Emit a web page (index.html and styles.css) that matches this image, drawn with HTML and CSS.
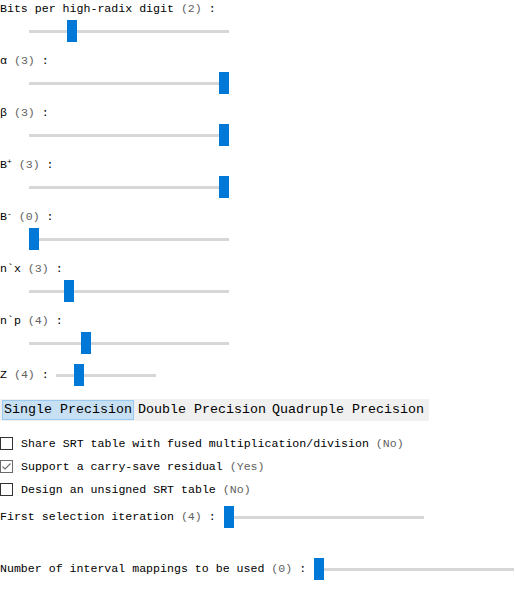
FILE: index.html
```html
<!DOCTYPE html>
<html>
<head>
<meta charset="utf-8">
<link rel="stylesheet" href="styles.css">
</head>
<body>
<div class="panel">
  <div class="field">
    <div class="label">Bits per high-radix digit <span class="val">(2)</span> :</div>
    <input class="range indent" type="range" min="1" max="6" value="2">
  </div>
  <div class="field">
    <div class="label">α <span class="val">(3)</span> :</div>
    <input class="range indent" type="range" min="0" max="3" value="3">
  </div>
  <div class="field">
    <div class="label">β <span class="val">(3)</span> :</div>
    <input class="range indent" type="range" min="0" max="3" value="3">
  </div>
  <div class="field">
    <div class="label">B<sup class="sup">+</sup> <span class="val">(3)</span> :</div>
    <input class="range indent" type="range" min="0" max="3" value="3">
  </div>
  <div class="field">
    <div class="label">B<sup class="sup">-</sup> <span class="val">(0)</span> :</div>
    <input class="range indent" type="range" min="0" max="3" value="0">
  </div>
  <div class="field">
    <div class="label">n`x <span class="val">(3)</span> :</div>
    <input class="range indent" type="range" min="1" max="12" value="3">
  </div>
  <div class="field">
    <div class="label">n`p <span class="val">(4)</span> :</div>
    <input class="range indent" type="range" min="1" max="12" value="4">
  </div>
  <div class="row row-z">
    <div class="label">Z <span class="val">(4)</span> :</div>
    <input class="range short" type="range" min="3" max="8" value="4">
  </div>

  <div class="tabs">
    <button class="tab selected">Single Precision</button>
    <button class="tab">Double Precision</button>
    <button class="tab">Quadruple Precision</button>
  </div>

  <div class="checks">
    <label class="check">
      <span class="box"></span>
      <span class="label">Share SRT table with fused multiplication/division <span class="val">(No)</span></span>
    </label>
    <label class="check">
      <span class="box checked"><svg viewBox="0 0 13 13" width="13" height="13"><path d="M2.5 6.5 L5 9 L10.5 3.5" fill="none" stroke="#6a6a6a" stroke-width="1.1"/></svg></span>
      <span class="label">Support a carry-save residual <span class="val">(Yes)</span></span>
    </label>
    <label class="check">
      <span class="box"></span>
      <span class="label">Design an unsigned SRT table <span class="val">(No)</span></span>
    </label>
  </div>

  <div class="row row-first">
    <div class="label">First selection iteration <span class="val">(4)</span> :</div>
    <input class="range" type="range" min="4" max="12" value="4">
  </div>
  <div class="row row-number">
    <div class="label">Number of interval mappings to be used <span class="val">(0)</span> :</div>
    <input class="range" type="range" min="0" max="8" value="0">
  </div>
</div>
</body>
</html>
```

FILE: styles.css
```css
html, body {
  margin: 0;
  padding: 0;
  background: #ffffff;
}

body {
  font-family: "Liberation Mono", "DejaVu Sans Mono", monospace;
  font-size: 11.6px;
  color: #000000;
  overflow: hidden;
}

.panel {
  display: flex;
  flex-direction: column;
  align-items: flex-start;
}

.label {
  line-height: 18px;
  white-space: nowrap;
}

.val {
  color: #616161;
}

.sup {
  font-size: 8px;
  line-height: 0;
  vertical-align: 4px;
}

.field {
  display: flex;
  flex-direction: column;
  align-items: flex-start;
  margin-bottom: 10px;
}

.range {
  -webkit-appearance: none;
  appearance: none;
  display: block;
  width: 200px;
  height: 22px;
  margin: 0;
  padding: 0;
  background: transparent;
  flex-shrink: 1;
  min-width: 0;
}

.range.indent {
  margin: 2px 0 0 29px;
}

.range.short {
  width: 100px;
  margin-left: -1px;
}

.range::-webkit-slider-runnable-track {
  height: 3px;
  background: #d7d7d7;
  border: none;
}

.range::-webkit-slider-thumb {
  -webkit-appearance: none;
  appearance: none;
  width: 10px;
  height: 22px;
  margin-top: -9.5px;
  background: #0078d7;
  border: none;
  border-radius: 0;
}

.row {
  display: flex;
  align-items: center;
  gap: 8px;
  height: 22px;
}

.tabs {
  display: flex;
  gap: 2px;
  margin-top: 13px;
  padding: 1px 3px 1px 2px;
  background: #f0f0f0;
}

.tab {
  font-family: "Liberation Mono", "DejaVu Sans Mono", monospace;
  font-size: 13.33px;
  line-height: 18px;
  height: 20px;
  padding: 0 1px;
  margin: 0;
  border: 1px solid transparent;
  background: transparent;
  color: #000000;
  white-space: nowrap;
}

.tab.selected {
  background: #c7e0f4;
  border-color: #99c9ef;
}

.checks {
  display: flex;
  flex-direction: column;
  margin-top: 11px;
}

.check {
  display: flex;
  align-items: center;
  gap: 8px;
  height: 23px;
}

.box {
  display: block;
  width: 11px;
  height: 11px;
  border: 1px solid #333333;
  background: #ffffff;
  position: relative;
}

.box.checked {
  border-color: #6a6a6a;
}

.box svg {
  position: absolute;
  left: -1px;
  top: -1px;
}

.row-first {
  margin-top: 5px;
}

.row-number {
  margin-top: 30px;
}
```
